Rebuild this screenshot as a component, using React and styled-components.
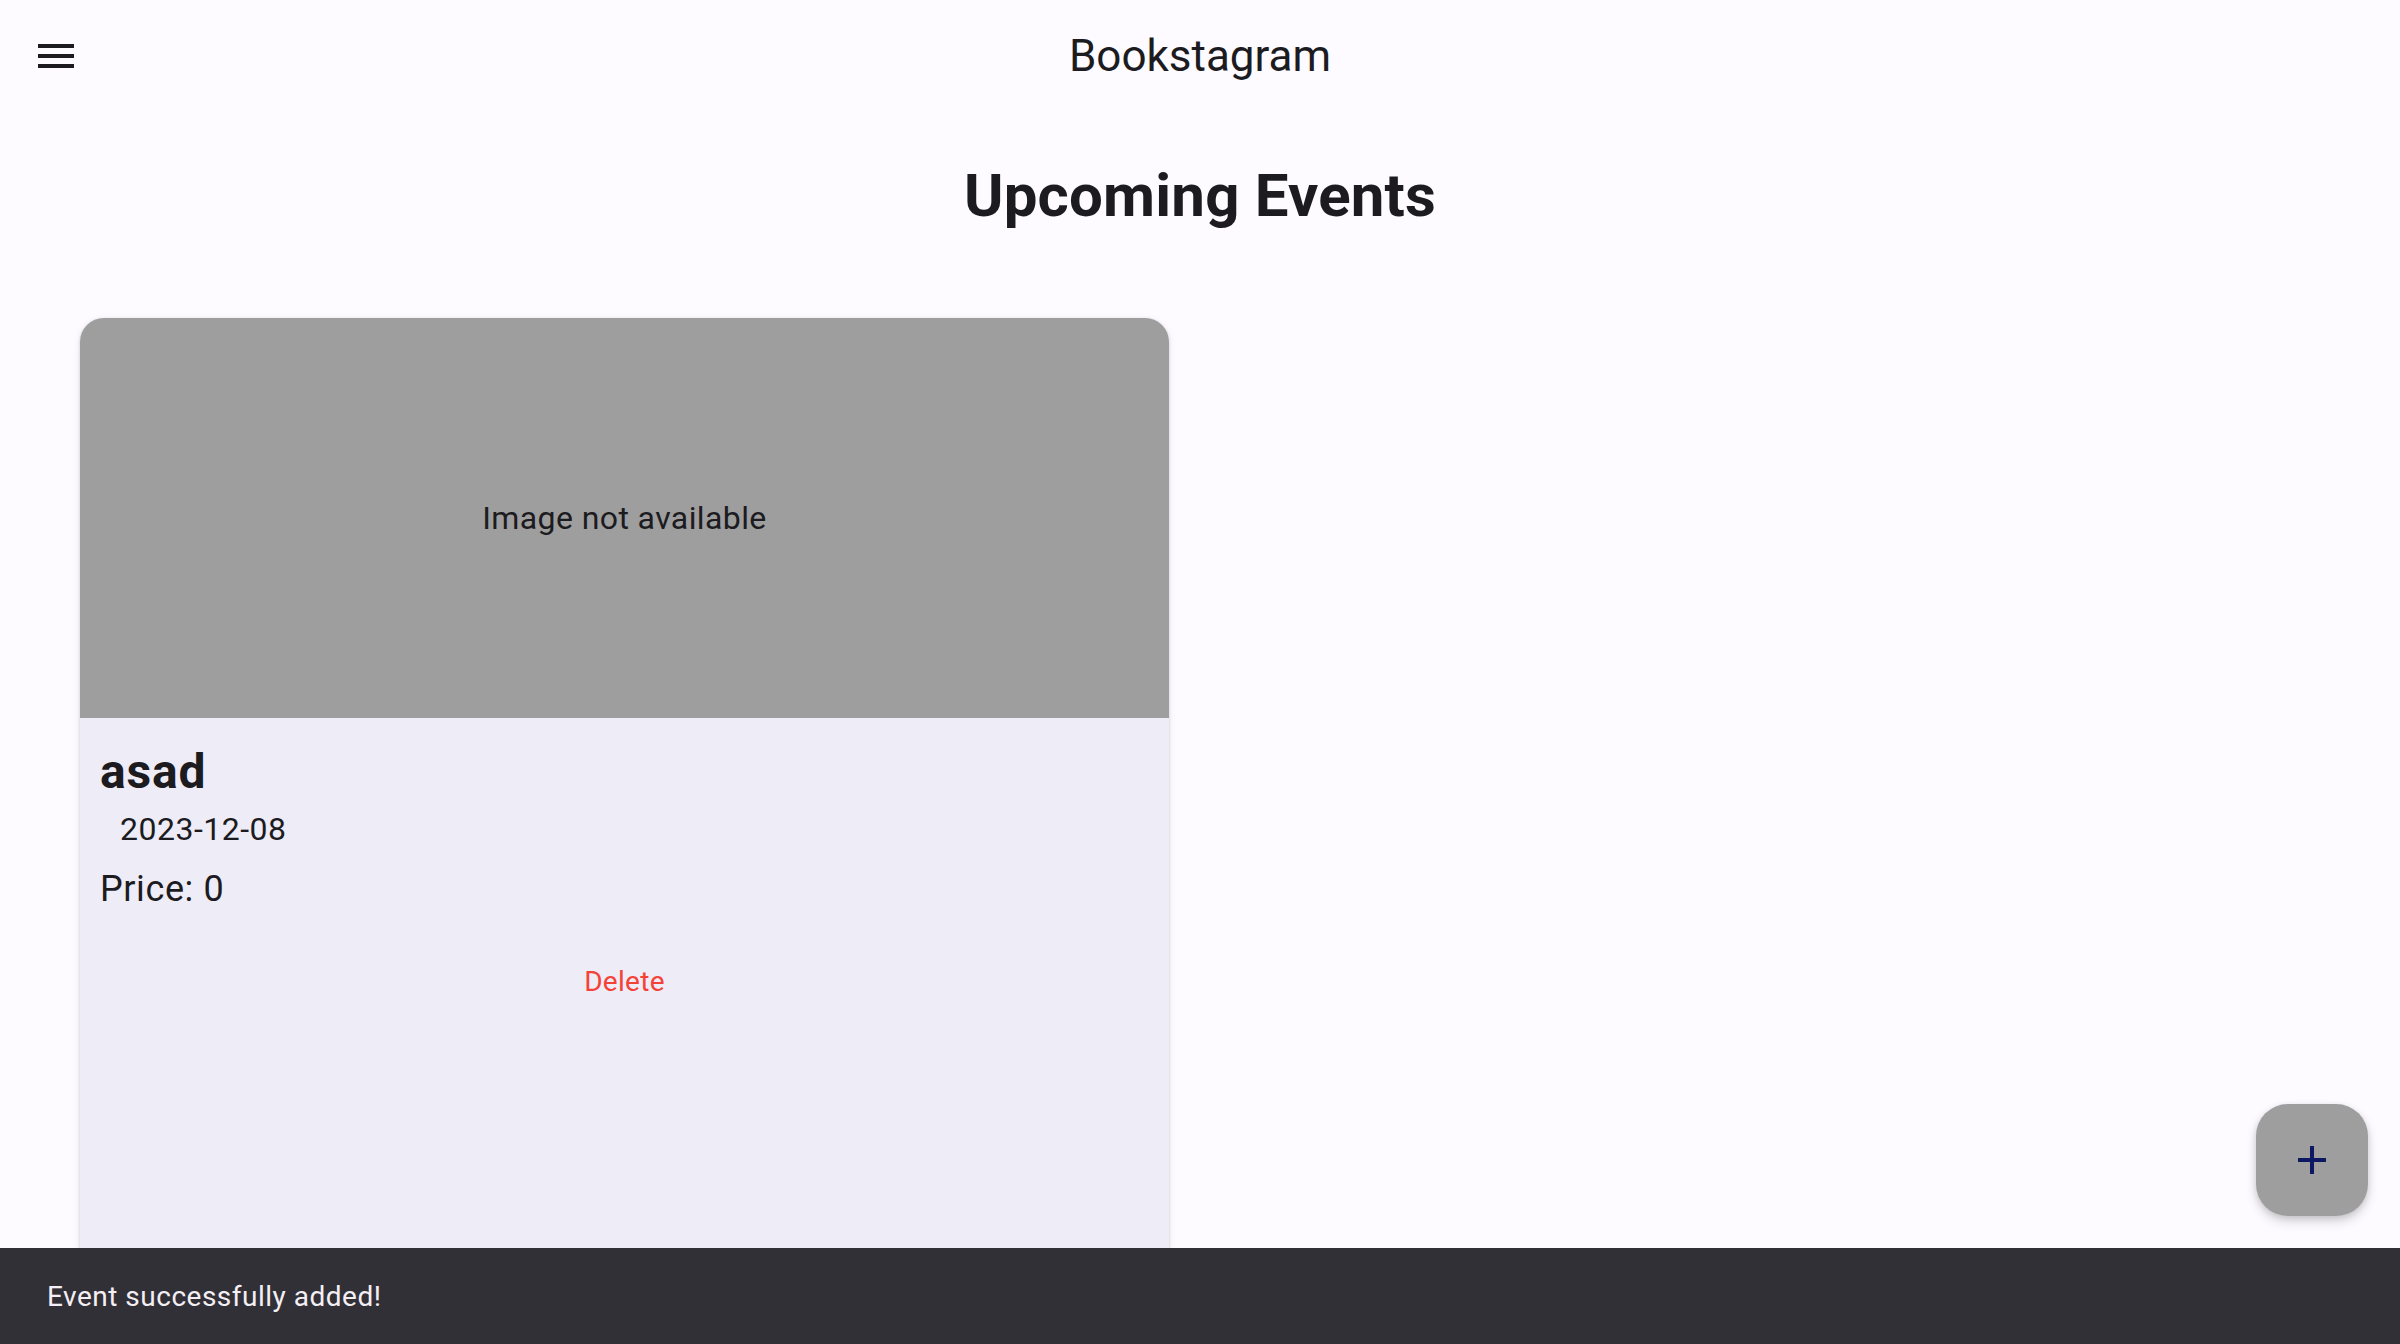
import React from "react";
import styled, { createGlobalStyle } from "styled-components";

const GlobalStyle = createGlobalStyle`
  html, body {
    margin: 0;
    padding: 0;
    background: #fdfbff;
    overflow: hidden;
  }
  * { box-sizing: border-box; }
  body {
    font-family: Roboto, "Noto Sans", "Liberation Sans", sans-serif;
    color: #1c1b1f;
  }
`;

const Screen = styled.div`
  position: relative;
  width: 100vw;
  height: 100vh;
  overflow: hidden;
  background: #fdfbff;
  display: flex;
  flex-direction: column;
`;

const AppBar = styled.header`
  height: 112px;
  display: grid;
  grid-template-columns: 112px 1fr 112px;
  align-items: center;
  flex-shrink: 0;
`;

const IconButton = styled.button`
  width: 96px;
  height: 96px;
  margin-left: 8px;
  border: none;
  background: transparent;
  padding: 0;
  display: flex;
  align-items: center;
  justify-content: center;
  color: #1c1b1f;
  cursor: pointer;
`;

const Title = styled.h1`
  margin: 0;
  text-align: center;
  font-size: 44px;
  font-weight: 400;
  line-height: 112px;
  color: #1c1b1f;
`;

const Content = styled.main`
  flex: 1;
  display: flex;
  flex-direction: column;
  padding: 0 80px;
`;

const Heading = styled.h2`
  margin: 48px 0 86px;
  text-align: center;
  font-size: 60px;
  font-weight: 700;
  line-height: 72px;
  letter-spacing: 0.2px;
  color: #1c1b1f;
`;

const Grid = styled.div`
  display: grid;
  grid-template-columns: repeat(2, 1fr);
  column-gap: 62px;
`;

const Card = styled.article`
  height: 1040px;
  border-radius: 24px;
  overflow: hidden;
  background: #eeecf6;
  box-shadow: 0 1px 3px rgba(0, 0, 0, 0.16), 0 2px 8px rgba(0, 0, 0, 0.08);
  display: flex;
  flex-direction: column;
`;

const ImagePlaceholder = styled.div`
  height: 400px;
  background: #9e9e9e;
  display: flex;
  align-items: center;
  justify-content: center;
  font-size: 32px;
  letter-spacing: 0.4px;
  color: #1c1b1f;
`;

const CardBody = styled.div`
  padding: 26px 20px 0;
  display: flex;
  flex-direction: column;
`;

const EventName = styled.div`
  font-size: 48px;
  font-weight: 700;
  line-height: 56px;
  letter-spacing: 0.8px;
`;

const EventDate = styled.div`
  margin-top: 10px;
  padding-left: 20px;
  font-size: 32px;
  line-height: 38px;
  letter-spacing: 0.5px;
`;

const EventPrice = styled.div`
  margin-top: 20px;
  font-size: 36px;
  line-height: 42px;
  letter-spacing: 0.6px;
`;

const DeleteButton = styled.button`
  align-self: center;
  margin-top: 56px;
  border: none;
  background: transparent;
  padding: 0 24px;
  font-family: inherit;
  font-size: 28px;
  font-weight: 400;
  line-height: 32px;
  letter-spacing: 0.3px;
  color: #f44336;
  cursor: pointer;
`;

const Fab = styled.button`
  position: absolute;
  right: 32px;
  bottom: 128px;
  width: 112px;
  height: 112px;
  border-radius: 32px;
  border: none;
  background: #9e9e9e;
  display: flex;
  align-items: center;
  justify-content: center;
  color: #0e1862;
  box-shadow: 0 6px 12px rgba(0, 0, 0, 0.14), 0 2px 6px rgba(0, 0, 0, 0.12);
  cursor: pointer;
`;

const Snackbar = styled.div`
  position: absolute;
  left: 0;
  right: 0;
  bottom: 0;
  height: 96px;
  padding: 29px 47px 27px;
  background: #313036;
  color: #f4eff4;
  font-size: 28px;
  line-height: 40px;
  letter-spacing: 0.5px;
`;

const MenuIcon = () => (
  <svg width="48" height="48" viewBox="0 0 24 24" fill="currentColor">
    <path d="M3 18h18v-2H3v2zm0-5h18v-2H3v2zm0-7v2h18V6H3z" />
  </svg>
);

const AddIcon = () => (
  <svg width="48" height="48" viewBox="0 0 24 24" fill="currentColor">
    <path d="M19 13h-6v6h-2v-6H5v-2h6V5h2v6h6v2z" />
  </svg>
);

const events = [{ name: "asad", date: "2023-12-08", price: 0 }];

export default function App() {
  return (
    <>
      <GlobalStyle />
      <Screen>
        <AppBar>
          <IconButton aria-label="menu">
            <MenuIcon />
          </IconButton>
          <Title>Bookstagram</Title>
          <span />
        </AppBar>
        <Content>
          <Heading>Upcoming Events</Heading>
          <Grid>
            {events.map((ev) => (
              <Card key={ev.name}>
                <ImagePlaceholder>Image not available</ImagePlaceholder>
                <CardBody>
                  <EventName>{ev.name}</EventName>
                  <EventDate>{ev.date}</EventDate>
                  <EventPrice>Price: {ev.price}</EventPrice>
                  <DeleteButton>Delete</DeleteButton>
                </CardBody>
              </Card>
            ))}
          </Grid>
        </Content>
        <Fab aria-label="add">
          <AddIcon />
        </Fab>
        <Snackbar>Event successfully added!</Snackbar>
      </Screen>
    </>
  );
}
